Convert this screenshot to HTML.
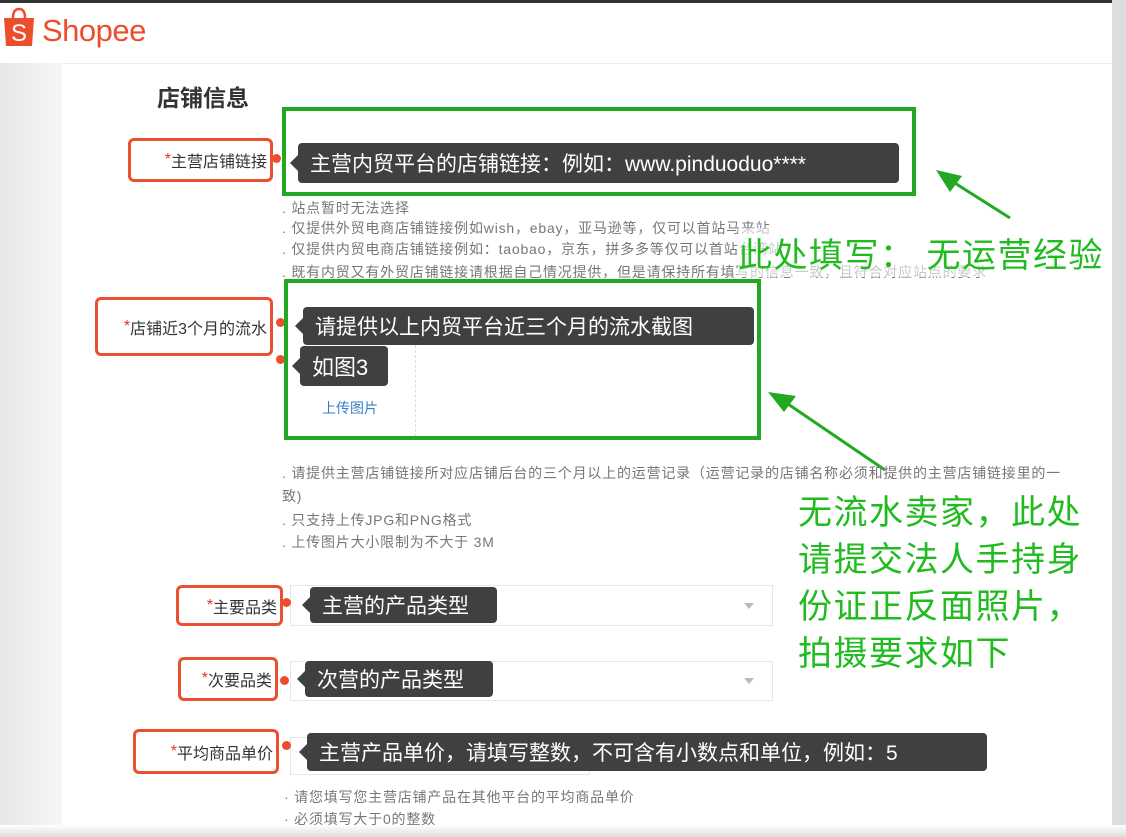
<!DOCTYPE html>
<html><head><meta charset="utf-8"><style>
*{margin:0;padding:0;box-sizing:border-box}
body{width:1126px;height:837px;overflow:hidden;background:#fff;position:relative;font-family:"Liberation Sans","Noto Sans CJK SC",sans-serif}
.a{position:absolute}
.lab{position:absolute;border:3px solid #e8502f;border-radius:6px;background:#fff;font-size:16px;color:#333;display:flex;align-items:center;justify-content:flex-end;padding-right:3px;white-space:nowrap}
.lab b{color:#d33;font-weight:normal}
.dot{position:absolute;width:9px;height:9px;border-radius:50%;background:#ee4d2d}
.tip{position:absolute;background:#3f4042;color:#fff;border-radius:4px;font-size:21px;display:flex;align-items:center;padding-left:12px;white-space:nowrap}
.tip:before{content:"";position:absolute;left:-8px;top:50%;margin-top:-8px;border:8px solid transparent;border-left:0;border-right-color:#3f4042}
.g{position:absolute;border:4px solid #22a822}
.h{position:absolute;font-size:14px;letter-spacing:0.8px;color:#777;white-space:nowrap}
.gt{position:absolute;color:#1fbb1f;font-size:34px;letter-spacing:1.5px;white-space:nowrap}
.sel{position:absolute;border:1px solid #e6e6e6;background:#fff}
.sel i{position:absolute;right:18px;top:50%;margin-top:-3px;border:5px solid transparent;border-top:6px solid #bbb;border-bottom:0}
</style></head><body>
<div class="a" style="left:0;top:0;width:1126px;height:3px;background:#333"></div>
<div class="a" style="left:0;top:63px;width:62px;height:774px;background:linear-gradient(90deg,#e8e8e8,#f6f6f6)"></div>
<div class="a" style="left:1112px;top:0;width:14px;height:837px;background:#ddd"></div>
<div class="a" style="left:62px;top:63px;width:1050px;height:1px;background:#eee"></div>
<div class="a" style="left:0;top:825px;width:1126px;height:12px;background:linear-gradient(#fff,#ddd)"></div>
<svg class="a" style="left:3px;top:6px" width="32" height="42" viewBox="0 0 32 42"><path d="M10 12 Q10 3 16 3 Q22 3 22 12" fill="none" stroke="#ee4d2d" stroke-width="2.5"/><path d="M1 12 H31 L29 40 H3 Z" fill="#ee4d2d"/><text x="16" y="35" text-anchor="middle" fill="#fff" font-size="24" font-family="Liberation Sans">S</text></svg>
<div class="a" style="left:42px;top:13px;font-size:31px;color:#ee4d2d;letter-spacing:-0.5px">Shopee</div>
<div class="a" style="left:157px;top:79px;font-size:23px;font-weight:bold;color:#333">店铺信息</div>

<div class="lab" style="left:128px;top:138px;width:145px;height:44px"><b>*</b>主营店铺链接</div>
<div class="dot" style="left:272px;top:154px"></div>
<div class="g" style="left:282px;top:107px;width:634px;height:89px"></div>
<div class="tip" style="left:298px;top:143px;width:601px;height:40px">主营内贸平台的店铺链接：例如：www.pinduoduo****</div>
<div class="h" style="left:282px;top:198px">. 站点暂时无法选择</div>
<div class="h" style="left:282px;top:218px">. 仅提供外贸电商店铺链接例如wish，ebay，亚马逊等，仅可以首站马来站</div>
<div class="h" style="left:282px;top:239px">. 仅提供内贸电商店铺链接例如：taobao，京东，拼多多等仅可以首站台湾站</div>
<div class="h" style="left:282px;top:262px">. 既有内贸又有外贸店铺链接请根据自己情况提供，但是请保持所有填写的信息一致，且符合对应站点的要求</div>
<div class="gt" style="left:738px;top:228px;background:rgba(255,255,255,.6)">此处填写： 无运营经验</div>
<svg class="a" style="left:0;top:0" width="1126" height="837"><line x1="1010" y1="218" x2="950" y2="180" stroke="#22a822" stroke-width="3"/><path d="M936 170 L962 176 L950 192 Z" fill="#22a822"/><line x1="885" y1="470" x2="785" y2="402" stroke="#22a822" stroke-width="3"/><path d="M768 392 L796 396 L784 412 Z" fill="#22a822"/></svg>

<div class="lab" style="left:95px;top:297px;width:178px;height:59px"><b>*</b>店铺近3个月的流水</div>
<div class="dot" style="left:276px;top:318px"></div>
<div class="dot" style="left:276px;top:355px"></div>
<div class="a" style="left:415px;top:345px;height:92px;border-left:1px dashed #ddd"></div>
<div class="g" style="left:284px;top:279px;width:477px;height:161px"></div>
<div class="tip" style="left:303px;top:307px;width:451px;height:38px">请提供以上内贸平台近三个月的流水截图</div>
<div class="tip" style="left:300px;top:346px;width:88px;height:40px;font-size:22px">如图3</div>
<div class="a" style="left:322px;top:398px;font-size:14px;color:#3a7bc8">上传图片</div>
<div class="h" style="left:282px;top:463px">. 请提供主营店铺链接所对应店铺后台的三个月以上的运营记录（运营记录的店铺名称必须和提供的主营店铺链接里的一</div>
<div class="h" style="left:282px;top:486px">致)</div>
<div class="h" style="left:282px;top:510px">. 只支持上传JPG和PNG格式</div>
<div class="h" style="left:282px;top:532px">. 上传图片大小限制为不大于 3M</div>
<div class="gt" style="left:798px;top:490px;line-height:47px">无流水卖家，此处<br>请提交法人手持身<br>份证正反面照片，<br>拍摄要求如下</div>

<div class="sel" style="left:290px;top:585px;width:483px;height:41px"><i></i></div>
<div class="lab" style="left:176px;top:585px;width:107px;height:41px"><b>*</b>主要品类</div>
<div class="dot" style="left:282px;top:598px"></div>
<div class="tip" style="left:310px;top:587px;width:187px;height:36px">主营的产品类型</div>

<div class="sel" style="left:290px;top:661px;width:483px;height:40px"><i></i></div>
<div class="lab" style="left:178px;top:657px;width:100px;height:44px"><b>*</b>次要品类</div>
<div class="dot" style="left:280px;top:676px"></div>
<div class="tip" style="left:305px;top:661px;width:188px;height:36px">次营的产品类型</div>

<div class="sel" style="left:290px;top:737px;width:300px;height:38px"></div>
<div class="lab" style="left:133px;top:729px;width:146px;height:45px"><b>*</b>平均商品单价</div>
<div class="dot" style="left:282px;top:741px"></div>
<div class="tip" style="left:307px;top:733px;width:680px;height:38px">主营产品单价，请填写整数，不可含有小数点和单位，例如：5</div>
<div class="h" style="left:284px;top:787px">· 请您填写您主营店铺产品在其他平台的平均商品单价</div>
<div class="h" style="left:284px;top:809px">· 必须填写大于0的整数</div>
</body></html>
